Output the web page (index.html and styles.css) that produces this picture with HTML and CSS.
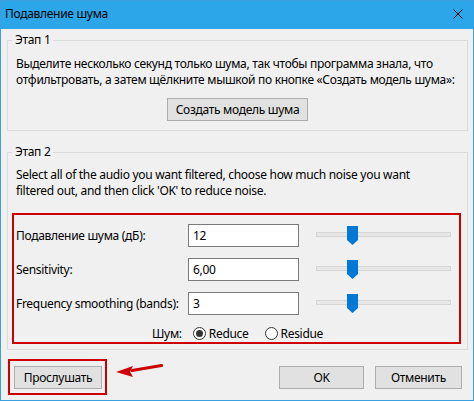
FILE: index.html
```html
<!DOCTYPE html>
<html lang="ru">
<head>
    <meta charset="UTF-8">
    <title>Подавление шума</title>
    <link rel="stylesheet" href="styles.css">
</head>
<body>

    <div class="window">
        <div class="titlebar">
            <span class="title">Подавление шума</span>
            <svg class="close" width="10" height="10" viewBox="0 0 10 10">
                <path d="M0.5 0.5 L9.5 9.5 M9.5 0.5 L0.5 9.5" stroke="#000" stroke-width="1" fill="none"/>
            </svg>
        </div>

        <div class="content">
            <fieldset class="group group-first">
                <legend>Этап 1</legend>
                <p class="hint">Выделите несколько секунд только шума, так чтобы программа знала, что<br>отфильтровать, а затем щёлкните мышкой по кнопке «Создать модель шума»:</p>
                <div class="center">
                    <button class="btn btn-profile">Создать модель шума</button>
                </div>
            </fieldset>

            <fieldset class="group group-second">
                <legend>Этап 2</legend>
                <p class="hint">Select all of the audio you want filtered, choose how much noise you want<br>filtered out, and then click 'OK' to reduce noise.</p>

                <div class="marked">
                    <div class="row">
                        <label class="row-label">Подавление шума (дБ):</label>
                        <input class="field" type="text" value="12">
                        <div class="slider">
                            <div class="track"></div>
                            <svg class="thumb" width="11" height="19" viewBox="0 0 11 19"><path d="M0 0 H11 V14 L5.5 19 L0 14 Z" fill="#0078d7"/></svg>
                        </div>
                    </div>
                    <div class="row">
                        <label class="row-label">Sensitivity:</label>
                        <input class="field" type="text" value="6,00">
                        <div class="slider">
                            <div class="track"></div>
                            <svg class="thumb" width="11" height="19" viewBox="0 0 11 19"><path d="M0 0 H11 V14 L5.5 19 L0 14 Z" fill="#0078d7"/></svg>
                        </div>
                    </div>
                    <div class="row">
                        <label class="row-label">Frequency smoothing (bands):</label>
                        <input class="field" type="text" value="3">
                        <div class="slider">
                            <div class="track"></div>
                            <svg class="thumb" width="11" height="19" viewBox="0 0 11 19"><path d="M0 0 H11 V14 L5.5 19 L0 14 Z" fill="#0078d7"/></svg>
                        </div>
                    </div>
                    <div class="radio-row">
                        <span class="radio-title">Шум:</span>
                        <span class="radio checked"></span>
                        <span class="radio-text">Reduce</span>
                        <span class="radio"></span>
                        <span class="radio-text">Residue</span>
                    </div>
                </div>
            </fieldset>

            <div class="footer">
                <div class="marked-btn">
                    <button class="btn btn-preview">Прослушать</button>
                </div>
                <svg class="arrow" width="47" height="14" viewBox="0 0 47 14">
                    <path d="M45.5 1.5 L16 6.5" stroke="#cc0000" stroke-width="3" stroke-linecap="round" fill="none"/>
                    <path d="M0 8 L17 2 L14 7.5 L17 13 Z" fill="#cc0000"/>
                </svg>
                <div class="spacer"></div>
                <button class="btn btn-ok">OK</button>
                <button class="btn btn-cancel">Отменить</button>
            </div>
        </div>
    </div>

</body>
</html>
```

FILE: styles.css
```css
* {
    box-sizing: border-box;
}

body {
    margin: 0;
    font-family: "Noto Sans", "Liberation Sans", sans-serif;
    font-size: 12px;
    letter-spacing: -0.3px;
    color: #000;
    background: #f0f0f0;
}

.window {
    width: 474px;
    height: 401px;
    border: 1px solid #3aa0df;
    background: #f0f0f0;
}

.titlebar {
    height: 28px;
    padding: 0 10px 3px 4px;
    background: #2ca5e9;
    display: flex;
    align-items: center;
    justify-content: space-between;
}

.title {
    font-size: 12px;
}

.content {
    padding: 0 5px 0 6px;
}

.group {
    margin: 0;
    min-width: 0;
    border: 1px solid #dcdcdc;
    padding: 8px 8px 9px 8px;
}

.group legend {
    padding: 0 3px;
    margin-left: -4px;
    line-height: 16px;
}

.group-first {
    margin-top: 3px;
}

.group-second {
    margin-top: 13px;
    padding-top: 7px;
    padding-bottom: 5px;
}

.hint {
    margin: 0;
    line-height: 16px;
}

.center {
    display: flex;
    justify-content: center;
    margin-top: 10px;
}

.btn {
    height: 23px;
    padding: 0;
    font-family: inherit;
    font-size: 12px;
    letter-spacing: inherit;
    color: #000;
    background: #e1e1e1;
    border: 1px solid #adadad;
    border-radius: 0;
}

.btn-profile {
    width: 141px;
}

.marked {
    margin: 14px -2px 0 -4px;
    border: 2px solid #cc0000;
    padding: 9px 8px 1px 2px;
}

.row {
    display: flex;
    align-items: center;
    height: 23px;
    margin-bottom: 11px;
}

.row-label {
    width: 172px;
}

.field {
    width: 111px;
    height: 23px;
    border: 1px solid #7a7a7a;
    background: #fff;
    padding: 0 4px;
    font-family: inherit;
    font-size: 12px;
    letter-spacing: inherit;
    color: #000;
    outline: none;
}

.slider {
    position: relative;
    width: 135px;
    height: 23px;
    margin-left: 17px;
}

.track {
    position: absolute;
    left: 0;
    right: 0;
    top: 8px;
    height: 5px;
    background: #e7e7e7;
    border: 1px solid #d6d6d6;
}

.thumb {
    position: absolute;
    left: 31px;
    top: 2px;
}

.radio-row {
    display: flex;
    align-items: center;
    height: 16px;
    margin-top: -1px;
    padding-left: 136px;
}

.radio-title {
    margin-right: 11px;
}

.radio {
    width: 13px;
    height: 13px;
    border: 1px solid #333;
    border-radius: 50%;
    background: #fff;
    margin-right: 3px;
    display: flex;
    align-items: center;
    justify-content: center;
}

.radio.checked::after {
    content: "";
    width: 7px;
    height: 7px;
    border-radius: 50%;
    background: #333;
}

.radio-text {
    margin-right: 16px;
}

.footer {
    display: flex;
    align-items: flex-start;
    margin-top: 9px;
    padding: 0 6px 0 1px;
}

.marked-btn {
    border: 2px solid #cc0000;
    padding: 5px 3px 4px 4px;
}

.btn-preview {
    width: 88px;
}

.arrow {
    margin: 5px 0 0 9px;
}

.spacer {
    flex: 1;
}

.btn-ok {
    width: 85px;
    margin-top: 7px;
}

.btn-cancel {
    width: 87px;
    margin-top: 7px;
    margin-left: 11px;
}
```
